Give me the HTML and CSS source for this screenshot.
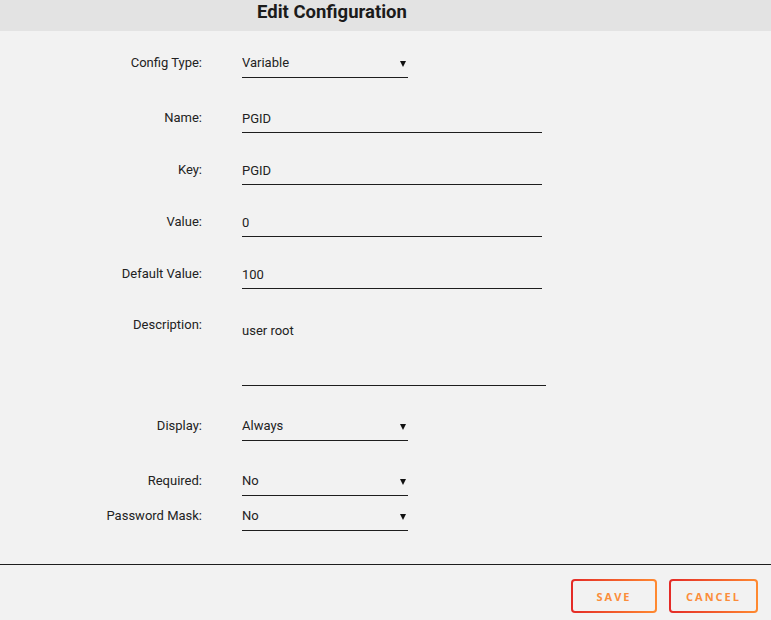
FILE: index.html
```html
<!DOCTYPE html>
<html lang="en">
<head>
  <meta charset="utf-8">
  <title>Edit Configuration</title>
  <link rel="stylesheet" href="styles.css">
</head>
<body>

  <header>
    <h1>Edit Configuration</h1>
  </header>

  <form class="config-form">
    <div class="row">
      <label for="type">Config Type:</label>
      <span class="select-wrap">
        <select id="type"><option>Variable</option></select>
      </span>
    </div>

    <div class="row gap-big">
      <label for="name">Name:</label>
      <input id="name" type="text" value="PGID">
    </div>

    <div class="row">
      <label for="key">Key:</label>
      <input id="key" type="text" value="PGID">
    </div>

    <div class="row">
      <label for="val">Value:</label>
      <input id="val" type="text" value="0">
    </div>

    <div class="row">
      <label for="def">Default Value:</label>
      <input id="def" type="text" value="100">
    </div>

    <div class="row">
      <label for="desc" class="label-desc">Description:</label>
      <textarea id="desc">user root</textarea>
    </div>

    <div class="row gap-big">
      <label for="disp">Display:</label>
      <span class="select-wrap">
        <select id="disp"><option>Always</option></select>
      </span>
    </div>

    <div class="row gap-big">
      <label for="req">Required:</label>
      <span class="select-wrap">
        <select id="req"><option>No</option></select>
      </span>
    </div>

    <div class="row gap-small">
      <label for="mask">Password Mask:</label>
      <span class="select-wrap">
        <select id="mask"><option>No</option></select>
      </span>
    </div>
  </form>

  <footer>
    <button type="button" class="btn btn-save">Save</button>
    <button type="button" class="btn btn-cancel">Cancel</button>
  </footer>

</body>
</html>
```

FILE: styles.css
```css
:root {
  --bg:        #f2f2f2;
  --bg-head:   #e3e3e3;
  --text:      #222222;
  --line:      #1e1e1e;
  --red:       #e42a27;
  --orange:    #ff8a30;
}
* { margin:0; padding:0; box-sizing:border-box; }
body {
  font-family:Roboto,"Liberation Sans",sans-serif;
  font-size:13px;
  color:var(--text);
  background:var(--bg);
}
header {
  background:var(--bg-head);
  height:31px;
  padding-left:257px;
}
header h1 {
  font-size:18.5px;
  font-weight:700;
  line-height:25px;
  color:#1b1b1b;
}
.config-form {
  padding-top:21px;
  height:534px;
  border-bottom:1px solid var(--line);
}
.row {
  display:flex;
  align-items:flex-start;
  gap:40px;
  margin-top:26px;
}
.row:first-child { margin-top:0; }
.row.gap-big { margin-top:29px; }
.row.gap-small { margin-top:9px; }
.row label {
  width:202px;
  text-align:right;
  line-height:22px;
}
.row label.label-desc { line-height:13px; padding-top:3px; }

.row input,
.row select,
.row textarea {
  font:inherit;
  color:var(--text);
  background:transparent;
  border:none;
  border-bottom:1px solid var(--line);
  border-radius:0;
  outline:none;
  height:26px;
  padding:0 0 3px;
  line-height:22px;
}
.row input { width:300px; }
.row textarea {
  width:304px;
  height:71px;
  padding-top:9px;
  resize:none;
  line-height:13px;
}
.select-wrap {
  position:relative;
  display:block;
  width:166px;
}
.select-wrap select {
  width:100%;
  -webkit-appearance:none;
  appearance:none;
}
.select-wrap::after {
  content:"";
  position:absolute;
  right:2px; top:9px;
  border-left:3px solid transparent;
  border-right:3px solid transparent;
  border-top:6px solid #111;
}

footer {
  display:flex;
  justify-content:flex-end;
  gap:12px;
  padding:14px 13px 0 0;
}
.btn {
  height:34px;
  font-family:"Open Sans",Roboto,sans-serif;
  font-size:11px;
  font-weight:700;
  letter-spacing:2px;
  text-transform:uppercase;
  color:#fb8d3a;
  cursor:pointer;
  border:2px solid transparent;
  border-radius:4px;
  background:
    linear-gradient(var(--bg),var(--bg)) padding-box,
    linear-gradient(90deg,var(--red),var(--orange)) border-box;
}
.btn-save { width:86px; }
.btn-cancel { width:89px; }
```
